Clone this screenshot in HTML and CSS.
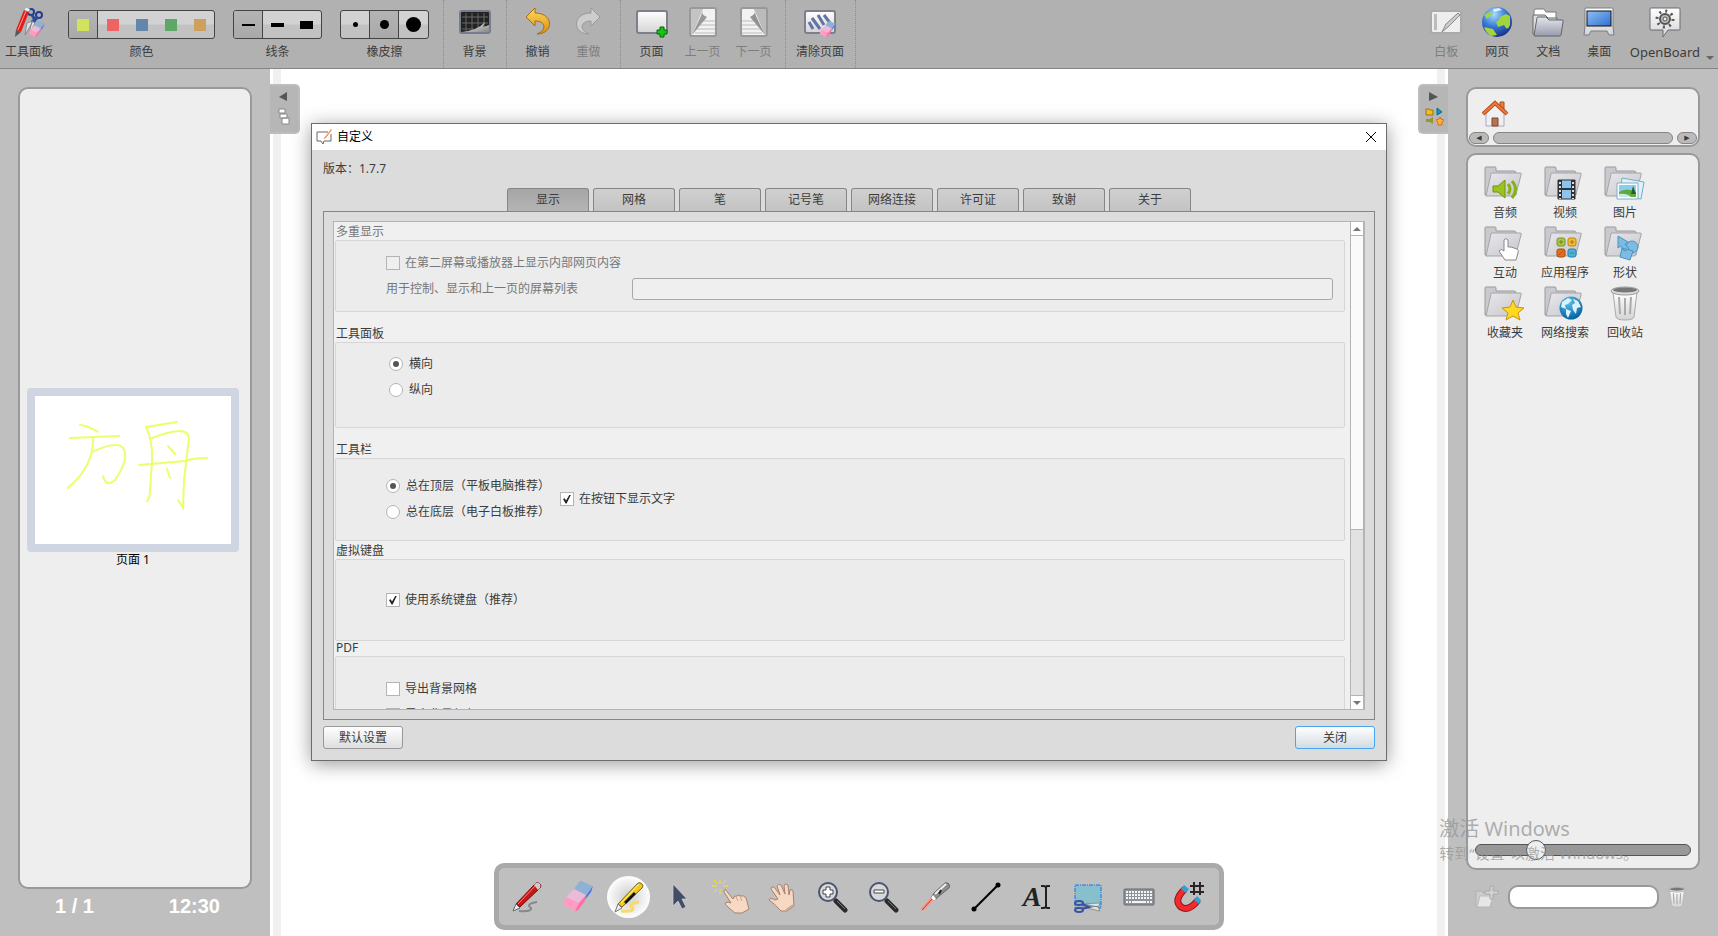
FILE: index.html
```
<!DOCTYPE html>
<html lang="zh-CN">
<head>
    <title>OpenBoard</title>
    <meta charset="UTF-8">
    <meta name="viewport" content="width=device-width, initial-scale=1.0">
    <link rel="stylesheet" href="styles.css">
</head>
<body>
    <!-- shared gradients and shapes -->
    <svg class="defs" aria-hidden="true">
        <defs>
            <linearGradient id="silver" x1="0" y1="0" x2="0" y2="1"><stop offset="0" stop-color="#fff"/><stop offset="1" stop-color="#d4d4d6"/></linearGradient>
            <linearGradient id="folderFill" x1="0" y1="0" x2="1" y2="1"><stop offset="0" stop-color="#e9e9ed"/><stop offset="1" stop-color="#c6c6ca"/></linearGradient>
            <linearGradient id="gold" x1="0" y1="0" x2="0" y2="1"><stop offset="0" stop-color="#ffdc5c"/><stop offset="1" stop-color="#d98b12"/></linearGradient>
            <linearGradient id="sky" x1="0" y1="0" x2="1" y2="1"><stop offset="0" stop-color="#8fc0f5"/><stop offset="1" stop-color="#2f6fd0"/></linearGradient>
            <linearGradient id="slate" x1="0" y1="0" x2="0" y2="1"><stop offset="0" stop-color="#e4e6ee"/><stop offset="1" stop-color="#989cab"/></linearGradient>
            <linearGradient id="fold" x1="0" y1="0" x2="1" y2="1"><stop offset="0" stop-color="#f2f2f2"/><stop offset="1" stop-color="#888"/></linearGradient>
            <radialGradient id="sea" cx="40%" cy="25%" r="80%"><stop offset="0" stop-color="#a8dcff"/><stop offset=".5" stop-color="#3a78d8"/><stop offset="1" stop-color="#142a80"/></radialGradient>
            <radialGradient id="webSea" cx="40%" cy="25%" r="80%"><stop offset="0" stop-color="#5cc0ee"/><stop offset="1" stop-color="#005c9c"/></radialGradient>
            <symbol id="folder" viewBox="0 0 42 36">
                <path d="M1 30V3q0-1 1-1h9q1 0 1 1v3h18q2 0 2 2v22z" fill="#c9c9ce" stroke="#9a9a9e"/>
                <path d="M2 31 7 9q0-1 1-1h28q2 0 1 2l-5 19q-1 2-2 2z" fill="url(#folderFill)" stroke="#a5a5a9"/>
            </symbol>
            <symbol id="eraser" viewBox="0 0 32 32">
                <path d="M12 8 17 1q1-1 2-1l12 5-6 11z" fill="#8fb1d3"/>
                <path d="m31 5-7 10-2 5 7-9z" fill="#4a70e0"/>
                <path d="m12 8 12 6-6 10L4 16z" fill="#eabbd8"/>
                <path d="M4 16 1 24l12 6 4-8z" fill="#ff9cc4"/>
                <path d="m24 14-7 8-4 8q2 0 3-1l7-9z" fill="#ff6fa8"/>
            </symbol>
            <symbol id="bin" viewBox="0 0 30 36">
                <path d="M3 7h24l-3 25q-1 3-9 3t-9-3z" fill="url(#silver)" stroke="#aaa"/>
                <path d="m9 12 1 17M15 13v17m6-18-1 17" stroke="#aaa" stroke-width="2" fill="none"/>
                <ellipse cx="15" cy="6" rx="14" ry="4" fill="#ddd" stroke="#999"/>
                <ellipse cx="15" cy="5" rx="12" ry="2.500" fill="#777"/>
            </symbol>
            <symbol id="lens" viewBox="0 0 32 32">
                <path d="m19 20 9 9" stroke="#2b2b2b" stroke-width="5" stroke-linecap="round"/>
                <path d="m20 20 8 8" stroke="#777" stroke-width="1"/>
                <circle cx="11" cy="11" r="9" fill="#d6d8dc" stroke="#4a5470" stroke-width="2"/>
            </symbol>
        </defs>
    </svg>

    <header class="toolbar">
        <div class="section section-pickers">
            <button class="tool">
                <svg width="32" height="32" viewBox="0 0 32 32">
                    <circle cx="18" cy="6" r="3" fill="none" stroke="#23408f" stroke-width="2"/><circle cx="26" cy="9" r="3" fill="none" stroke="#23408f" stroke-width="2"/>
                    <path d="m19 9 3 5-2 3M24 12l-5 4" stroke="#2b4b9c" stroke-width="3" fill="none"/><path d="m20 15-8 14 2-12zM19 15l-3 13 6-11z" fill="#dfe3ea" stroke="#777" stroke-width=".7"/>
                    <path d="m11 4 5 2-8 20-5-2z" fill="#e21c17"/><path d="M13 5 5 24" stroke="#fa9b92" stroke-width="1"/><path d="m11 4 2-3 4 2-1 3z" fill="#eee" stroke="#888" stroke-width=".5"/><path d="m3 24 5 2-6 5z" fill="#555"/>
                    <use href="#eraser" x="15" y="15" width="17" height="17"/>
                </svg>
                <span>工具面板</span>
            </button>
            <div class="picker">
                <div class="cells">
                    <button class="on" aria-label="黄色"><i class="swatch yellow"></i></button>
                    <button aria-label="红色"><i class="swatch red"></i></button>
                    <button aria-label="蓝色"><i class="swatch blue"></i></button>
                    <button aria-label="绿色"><i class="swatch green"></i></button>
                    <button aria-label="橙色"><i class="swatch orange"></i></button>
                </div>
                <span>颜色</span>
            </div>
            <div class="picker">
                <div class="cells">
                    <button class="on" aria-label="细线"><i class="line thin"></i></button>
                    <button aria-label="中线"><i class="line medium"></i></button>
                    <button aria-label="粗线"><i class="line thick"></i></button>
                </div>
                <span>线条</span>
            </div>
            <div class="picker">
                <div class="cells">
                    <button class="split" aria-label="小橡皮"><i class="dot small"></i></button>
                    <button class="on" aria-label="中橡皮"><i class="dot mid"></i></button>
                    <button aria-label="大橡皮"><i class="dot big"></i></button>
                </div>
                <span>橡皮擦</span>
            </div>
        </div>
        <div class="section">
            <button class="tool">
                <svg width="32" height="32" viewBox="0 0 32 32">
                    <rect x="1" y="5" width="30" height="22" rx="2" fill="#222" stroke="#777d8d" stroke-width="2"/>
                    <path d="M7 7v18M13 7v18M19 7v18M25 7v14M3 11h26M3 17h26M3 23h12" stroke="#666" stroke-width="1"/>
                    <path d="M3 26q16-2 23-10l-2 5 6-2v7z" fill="url(#fold)"/>
                </svg>
                <span>背景</span>
            </button>
        </div>
        <div class="section">
            <button class="tool">
                <svg width="32" height="32" viewBox="0 0 32 32">
                    <path d="M4 11 13 2v5c19 0 19 21 2 21 10-4 9-13-2-13v5z" fill="url(#gold)" stroke="#a86d12"/>
                </svg>
                <span>撤销</span>
            </button>
            <button class="tool" disabled>
                <svg width="32" height="32" viewBox="0 0 32 32">
                    <path d="M27 11 18 2v5C-1 7-1 28 16 28 6 24 7 15 18 15v5z" fill="#cdcdcd" stroke="#999"/>
                </svg>
                <span>重做</span>
            </button>
        </div>
        <div class="section">
            <button class="tool">
                <svg width="32" height="32" viewBox="0 0 32 32">
                    <rect x="1" y="5" width="30" height="22" rx="2" fill="url(#silver)" stroke="#7d7f8c" stroke-width="2"/>
                    <path d="M24 21h4v3h3v4h-3v3h-4v-3h-3v-4h3z" fill="#12c812" stroke="#086008"/>
                </svg>
                <span>页面</span>
            </button>
            <button class="tool" disabled>
                <svg width="32" height="32" viewBox="0 0 32 32">
                    <rect x="3" y="2" width="26" height="28" rx="2" fill="#f2f2f2" stroke="#999" stroke-width="2"/>
                    <path d="M12 15h16M11 19h17M9 23h19M8 27h20" stroke="#bbb"/>
                    <path d="M4 3h12L5 29H4z" fill="#c4c4c4"/><path d="M16 3q-3 5 4 8L5 29l9-19z" fill="#999"/>
                </svg>
                <span>上一页</span>
            </button>
            <button class="tool" disabled>
                <svg width="32" height="32" viewBox="0 0 32 32">
                    <rect x="3" y="2" width="26" height="28" rx="2" fill="#f2f2f2" stroke="#999" stroke-width="2"/>
                    <path d="M4 15h16M4 19h17M4 23h19M4 27h20" stroke="#bbb"/>
                    <path d="M28 3H16l11 26h1z" fill="#bbb"/><path d="M16 3q3 5-4 8l15 18-9-19z" fill="#929292"/>
                </svg>
                <span>下一页</span>
            </button>
        </div>
        <div class="section">
            <button class="tool">
                <svg width="32" height="32" viewBox="0 0 32 32">
                    <rect x="1" y="5" width="30" height="22" rx="2" fill="url(#silver)" stroke="#7d7f8c" stroke-width="2"/>
                    <path d="m5 16 4 7M8 12l8 11M14 9l6 10M20 9l6 8" stroke="#6273a4" stroke-width="3"/>
                    <use href="#eraser" x="15" y="15" width="17" height="17"/>
                </svg>
                <span>清除页面</span>
            </button>
        </div>
        <div class="section section-right">
            <button class="tool" disabled>
                <svg width="32" height="32" viewBox="0 0 32 32">
                    <rect x="1" y="5" width="30" height="22" rx="2" fill="#eee" stroke="#aaa" stroke-width="2"/>
                    <rect x="4" y="8" width="3" height="16" fill="#bbb"/>
                    <path d="m12 26 4-8L28 7l2 2-12 12z" fill="#ccc" stroke="#888"/>
                </svg>
                <span>白板</span>
            </button>
            <button class="tool">
                <svg width="32" height="32" viewBox="0 0 32 32">
                    <circle cx="16" cy="16" r="15" fill="url(#sea)"/>
                    <path d="M15 16q4-2 4-5l6-3 4 2v9q-2 5-4 3l-2-3-6 2zM3 9l5-3 4 2-6 5zM3 21l9 2 4 6-6 1q-5-3-7-9z" fill="#a4d43c"/>
                    <path d="m12 3 6-1 3 2-4 1-4 1z" fill="#fff" opacity=".8"/>
                </svg>
                <span>网页</span>
            </button>
            <button class="tool">
                <svg width="32" height="32" viewBox="0 0 32 32">
                    <path d="M2 26V5q0-2 2-2h8l2 3h10v20z" fill="#fff" stroke="#777b87"/>
                    <path d="M1 28V10q0-1 1-1h11l3 3h9v16z" fill="#ddd" stroke="#666"/>
                    <path d="m2 29 3-17q0-1 1-1h8l3 3h13q2 0 1 2l-2 13q0 1-2 1H3q-1 0-1-1z" fill="url(#slate)" stroke="#60636d"/>
                </svg>
                <span>文档</span>
            </button>
            <button class="tool">
                <svg width="32" height="32" viewBox="0 0 32 32">
                    <path d="M2 3q0-1 1-1h26q1 0 1 1v18l1 8h-5l-2-4H8l-2 4H1l1-8z" fill="url(#silver)" stroke="#777c86"/>
                    <rect x="4" y="5" width="24" height="15" fill="url(#sky)" stroke="#111"/>
                </svg>
                <span>桌面</span>
            </button>
            <button class="tool">
                <svg width="32" height="32" viewBox="0 0 32 32">
                    <path d="M2 2h28q1 0 1 1v20q0 1-1 1H19l-5 7v-7H2q-1 0-1-1V3q0-1 1-1z" fill="url(#silver)" stroke="#666b76"/>
                    <circle cx="16" cy="13" r="8" fill="none" stroke="#555" stroke-width="3" stroke-dasharray="2 4.280"/>
                    <circle cx="16" cy="13" r="5" fill="#bbb" stroke="#555" stroke-width="2"/><circle cx="16" cy="13" r="2" fill="#eee" stroke="#555"/>
                </svg>
                <span class="latin">OpenBoard</span>
            </button>
            <button class="more" aria-label="更多"></button>
        </div>
    </header>

    <div class="workspace">
        <aside class="side">
            <div class="panel pages">
                <figure>
                    <svg class="thumb" viewBox="0 0 196 148">
                        <path d="M45 29q9 1 18 7M35 42l49-2M58 42q1 28-25 50M57 56q24-11 30-5 9 10-7 33-9 8-12-4M142 26l-31 5q7 14 6 36l-2 27q0 8-3 11M117 42q36-14 37 0l-5 42-1 28-5-8M133 50l7 8M104 69l46-4q8-3 22-3M132 73l3 9"/>
                    </svg>
                    <figcaption>页面 1</figcaption>
                </figure>
            </div>
            <div class="status"><span>1 / 1</span><span>12:30</span></div>
        </aside>

        <main class="board">
            <button class="flap flap-left" aria-label="收起页面栏">
                <svg width="14" height="36" viewBox="0 0 14 36">
                    <path d="M10 1v9L2 6z" fill="#555"/>
                    <path d="M2 18h6v4H2zM3 23h7v4H3zM5 27h7v6H5z" fill="#fff" stroke="#888"/>
                </svg>
            </button>
            <button class="flap flap-right" aria-label="收起资源栏">
                <svg width="20" height="36" viewBox="0 0 20 36">
                    <path d="M5 1v9l9-4z" fill="#555"/>
                    <path d="M2 18h3l1 1h3v5H2z" fill="#f1bc22" stroke="#9b7410"/><path d="M13 17v7l5-3z" fill="#129ab8" stroke="#0b6a80"/>
                    <path d="M9 26v7l-3-2H2v-3h4z" fill="#98942a"/><path d="m16 26 1 2 3 1-2 2v3h-4v-3l-2-2 3-1z" fill="#ffb03c" stroke="#e06a10"/>
                </svg>
            </button>

            <div class="dialog" role="dialog" aria-labelledby="dialog-title">
                <div class="titlebar">
                    <svg width="17" height="17" viewBox="0 0 17 17" fill="none">
                        <path d="M12 3H1v9h4l2 3 1-3h7V5" stroke="#666"/><path d="m8 9 7-9 1 1-6 8-2 1z" fill="#f49a5c"/>
                    </svg>
                    <h2 id="dialog-title">自定义</h2>
                    <button class="close" aria-label="关闭窗口">
                        <svg width="12" height="12" viewBox="0 0 12 12"><path d="m1 1 10 10M11 1 1 11" stroke="#000"/></svg>
                    </button>
                </div>
                <div class="content">
                    <p class="version">版本：1.7.7</p>
                    <div class="tabs" role="tablist">
                        <button role="tab" aria-selected="true">显示</button>
                        <button role="tab">网格</button>
                        <button role="tab">笔</button>
                        <button role="tab">记号笔</button>
                        <button role="tab">网络连接</button>
                        <button role="tab">许可证</button>
                        <button role="tab">致谢</button>
                        <button role="tab">关于</button>
                    </div>
                    <div class="pane">
                        <div class="scroll">
                            <div class="groups">
                                <section class="group first disabled">
                                    <h3>多重显示</h3>
                                    <div class="box box-screens">
                                        <label><input type="checkbox" disabled>在第二屏幕或播放器上显示内部网页内容</label>
                                        <div class="field">
                                            <label for="screens">用于控制、显示和上一页的屏幕列表</label>
                                            <input type="text" id="screens" disabled>
                                        </div>
                                    </div>
                                </section>
                                <section class="group">
                                    <h3>工具面板</h3>
                                    <div class="box box-palette">
                                        <label><input type="radio" name="palette" checked>横向</label>
                                        <label><input type="radio" name="palette">纵向</label>
                                    </div>
                                </section>
                                <section class="group">
                                    <h3>工具栏</h3>
                                    <div class="box box-toolbar">
                                        <div class="stack">
                                            <label><input type="radio" name="toolbar" checked>总在顶层（平板电脑推荐）</label>
                                            <label><input type="radio" name="toolbar">总在底层（电子白板推荐）</label>
                                        </div>
                                        <label><input type="checkbox" checked>在按钮下显示文字</label>
                                    </div>
                                </section>
                                <section class="group near">
                                    <h3>虚拟键盘</h3>
                                    <div class="box box-keyboard">
                                        <label><input type="checkbox" checked>使用系统键盘（推荐）</label>
                                    </div>
                                </section>
                                <section class="group joined">
                                    <h3>PDF</h3>
                                    <div class="box box-pdf">
                                        <label><input type="checkbox">导出背景网格</label>
                                        <label><input type="checkbox">导出背景颜色</label>
                                    </div>
                                </section>
                            </div>
                            <div class="scrollbar">
                                <button class="up" aria-label="向上滚动"></button>
                                <div class="thumb-bar"></div>
                                <div class="track"></div>
                                <button class="down" aria-label="向下滚动"></button>
                            </div>
                        </div>
                    </div>
                    <div class="actions">
                        <button>默认设置</button>
                        <button class="primary">关闭</button>
                    </div>
                </div>
            </div>

            <nav class="palette">
                <button aria-label="笔">
                    <svg width="32" height="32" viewBox="0 0 32 32">
                        <path d="M8 30q13 1 12-3-6-4 6-6" fill="none" stroke="#888" stroke-width="2"/>
                        <path d="m5 23 20-21q2-1 4 1 2 2 0 4L9 26z" fill="#c91515" stroke="#731010"/><path d="m7 23 19-20" stroke="#ff8478"/><path d="m23 4 2-2q2-1 4 1 1 2 0 4l-2 2z" fill="#ccc"/><path d="m5 23 4 4-7 3z" fill="#eee" stroke="#666"/>
                    </svg>
                </button>
                <button aria-label="橡皮擦"><svg width="32" height="32"><use href="#eraser"/></svg></button>
                <button class="active" aria-label="荧光笔">
                    <svg width="32" height="32" viewBox="0 0 32 32">
                        <path d="M8 30q13 1 12-3-6-4 6-6" fill="none" stroke="#f8da68" stroke-width="3"/>
                        <path d="m5 23 20-21q2-1 4 1 2 2 0 4L9 26z" fill="#f2c91d" stroke="#7b6510"/><path d="m21 11 2 2L13 23l-2-2z" fill="#111"/><path d="M8 22 26 3" stroke="#fff79a"/><path d="m5 23 4 4-7 4z" fill="#eee" stroke="#777"/>
                    </svg>
                </button>
                <button aria-label="选择">
                    <svg width="32" height="32" viewBox="0 0 32 32"><path d="M9 3v22l5-5 4 8 4-2-4-8h5z" fill="#444d66" stroke="#d5d5dc" stroke-width=".7"/></svg>
                </button>
                <button aria-label="互动">
                    <svg width="40" height="38" viewBox="0 0 40 38">
                        <path d="M9 1v5M9 11v5M1 8h5M12 8h5M3 2l3 3M15 2l-3 3M3 14l3-3M12 11l3 3" stroke="#ffdf22"/>
                        <path d="m14 11 8 10q1-4 4-3 2-2 4 0 3-1 5 2l3 11-7 4h-7l-6-5-4-4q1-3 6-1l-7-11q0-3 1-3z" fill="#f7d8c2" stroke="#a58270"/><path d="m25 19 2 4M29 18l2 5" stroke="#c9a28b"/>
                    </svg>
                </button>
                <button aria-label="滚动页面">
                    <svg width="32" height="32" viewBox="0 0 32 32"><path d="m12 18-7-10q0-3 3-2l6 8-3-9q1-3 4-1l4 9-1-9q2-2 4 0l1 10 1-5q3-1 3 1l1 15-7 5h-6q-7-8-12-11 1-3 6 0z" fill="#f7d8c2" stroke="#a58270"/><path d="m20 29 7-5" stroke="#d0ac96" stroke-width="2"/></svg>
                </button>
                <button aria-label="放大"><svg width="32" height="32" viewBox="0 0 32 32"><use href="#lens"/><path d="M9 6h4v3h3v4h-3v3H9v-3H6V9h3z" fill="#fff" stroke="#444"/></svg></button>
                <button aria-label="缩小"><svg width="32" height="32" viewBox="0 0 32 32"><use href="#lens"/><path d="M6 9h10v3H6z" fill="#fff" stroke="#444"/></svg></button>
                <button aria-label="激光笔">
                    <svg width="32" height="32" viewBox="0 0 32 32">
                        <path d="m3 29 10-11" stroke="#f29a92" stroke-width="4"/><path d="m3 29 10-11" stroke="#e22a22"/>
                        <path d="m12 17 3-5L26 2q2-1 4 1 1 2 0 4L19 16l-4 4z" fill="#8d8d8d" stroke="#666"/><path d="m16 13 11-10" stroke="#eee" stroke-width="2"/><path d="m12 17 3 3 2-2-3-4z" fill="#fff"/><path d="m20 13 2-4" stroke="#222" stroke-width="2"/>
                    </svg>
                </button>
                <button aria-label="画线">
                    <svg width="32" height="32" viewBox="0 0 32 32"><path d="M4 28 28 4" stroke="#000" stroke-width="2"/><circle cx="4" cy="28" r="2.500"/><circle cx="28" cy="4" r="2.500"/></svg>
                </button>
                <button class="text-tool" aria-label="文字">
                    <span>A</span>
                    <svg width="9" height="24" viewBox="0 0 9 24" fill="none"><path d="M0 1h3l2 1 1-1h3M5 2v20M0 23h3l2-1 1 1h3" stroke="#222" stroke-width="2"/></svg>
                </button>
                <button aria-label="截图">
                    <svg width="32" height="32" viewBox="0 0 32 32">
                        <rect x="3" y="4" width="26" height="23" fill="#87bfcd" stroke="#1f6fe8" stroke-dasharray="4 1 1 1"/>
                        <path d="m10 23 18-1-1 3-14 2zM10 26l18 4-2-4-14-3z" fill="#e4e4e4" stroke="#777" stroke-width=".7"/>
                        <ellipse cx="7" cy="22" rx="4" ry="2" fill="none" stroke="#3f4fa0" stroke-width="2"/><ellipse cx="7" cy="29" rx="4" ry="2" fill="none" stroke="#3f4fa0" stroke-width="2"/><path d="m10 23 7 3-7 2" stroke="#3f4fa0" stroke-width="2" fill="none"/>
                    </svg>
                </button>
                <button aria-label="键盘">
                    <svg width="32" height="32" viewBox="0 0 32 32">
                        <rect x="1" y="8" width="30" height="16" rx="1" fill="#8e9299" stroke="#666a72"/>
                        <path d="M3 11h26M3 14h26M3 17h26M3 21h26" stroke="#f4f4f4" stroke-width="2" stroke-dasharray="2 1"/><path d="M10 21h12" stroke="#f4f4f4" stroke-width="2"/>
                    </svg>
                </button>
                <button aria-label="吸附">
                    <svg width="32" height="32" viewBox="0 0 32 32">
                        <path d="M11 8Q-1 19 7 26q8 5 17-7" fill="none" stroke="#8c1414" stroke-width="7"/><path d="M11 8Q-1 19 7 26q8 5 17-7" fill="none" stroke="#f02a2e" stroke-width="5"/>
                        <path d="m10 4 5 4-3 4-5-4zM23 15l4 4-2 4-5-4z" fill="#2aa2dc"/><path d="M20 1v13M26 1v13M16 5h14M16 11h14" stroke="#2b2427" stroke-width="2"/>
                    </svg>
                </button>
            </nav>
        </main>

        <aside class="side side-right">
            <div class="panel path">
                <button class="home" aria-label="主页">
                    <svg width="26" height="28" viewBox="0 0 26 28">
                        <path d="M18 2h4v10h-4z" fill="#e98045" stroke="#a94f20"/><path d="M4 13 13 5l9 8v13H4z" fill="#eef0f3" stroke="#aab"/>
                        <path d="M1 14 13 3l12 11" fill="none" stroke="#b64c18" stroke-width="4"/><path d="M1 14 13 3l12 11" fill="none" stroke="#f07c3c" stroke-width="2"/><path d="M10 18h6v8h-6z" fill="#b9744f" stroke="#80462c"/>
                    </svg>
                </button>
                <div class="hscroll">
                    <button aria-label="向左">◀</button>
                    <div class="bar"></div>
                    <button aria-label="向右">▶</button>
                </div>
            </div>
            <div class="panel library">
                <div class="items">
                    <button><svg width="42" height="36" viewBox="0 0 42 36"><use href="#folder"/><path d="M9 21h5l7-6v18l-7-6H9z" fill="#9bc31c" stroke="#6f9410"/><path d="M24 19q4 5 0 10M28 16q7 8 0 17" fill="none" stroke="#88b018" stroke-width="3"/></svg><span>音频</span></button>
                    <button><svg width="42" height="36" viewBox="0 0 42 36"><use href="#folder"/><path d="M14 15h17v19H14z" fill="#8dc4ee" stroke="#333"/><path d="M16 15v19M29 15v19" stroke="#333" stroke-width="4"/><path d="M16 17v17M29 17v17" stroke="#ddd" stroke-width="2" stroke-dasharray="2 2"/><path d="M17 24h11" stroke="#333" stroke-width="2"/></svg><span>视频</span></button>
                    <button><svg width="42" height="36" viewBox="0 0 42 36"><use href="#folder"/><path d="m18 13 22 4-3 17-21-3z" fill="#dff2fa" stroke="#71aec8"/><path d="M13 18h21v16H13z" fill="#fff" stroke="#7ab0bf"/><path d="M15 20h17v12H15z" fill="#86d0ee"/><path d="M15 27q8-5 17 0v5H15z" fill="#62a93b"/><path d="M15 29q8-1 12 3H15z" fill="#c9e6ee"/><path d="m29 21 3 8h-5z" fill="#285e2c"/></svg><span>图片</span></button>
                    <button><svg width="42" height="36" viewBox="0 0 42 36"><use href="#folder"/><path d="M20 26V15q2-3 4 0v7h3l3 1 3 1q2 1 1 4l-2 7H21l-6-9q2-3 5 0z" fill="#fff" stroke="#888"/></svg><span>互动</span></button>
                    <button><svg width="42" height="36" viewBox="0 0 42 36"><use href="#folder"/><g stroke-width="1"><rect x="13" y="13" width="8" height="8" rx="2" fill="#a6c83c" stroke="#78942a"/><rect x="24" y="13" width="8" height="8" rx="2" fill="#f4bb26" stroke="#b98815"/><rect x="13" y="24" width="8" height="8" rx="2" fill="#e46c1c" stroke="#a64b10"/><rect x="24" y="24" width="8" height="8" rx="2" fill="#48b2dc" stroke="#2680a6"/></g><path d="M16 16h2v2h-2zM27 16h2v2h-2zM15 30l4-4M26 28h4" stroke="#665533" stroke-opacity=".6" fill="none"/></svg><span>应用程序</span></button>
                    <button><svg width="42" height="36" viewBox="0 0 42 36"><use href="#folder"/><circle cx="28" cy="22" r="6" fill="#7cbbe2" stroke="#4b93c0"/><path d="m14 11 10 6-3 2 4 5-5 2-3-5-3 2zM18 23l11 3-3 9-10-3z" fill="#7cbbe2" stroke="#4b93c0"/></svg><span>形状</span></button>
                    <button><svg width="42" height="36" viewBox="0 0 42 36"><use href="#folder"/><path d="m29 15 3 7 8 1-6 5 2 7-7-4-7 4 2-7-6-5 8-1z" fill="#ffd820" stroke="#c79212"/></svg><span>收藏夹</span></button>
                    <button><svg width="42" height="36" viewBox="0 0 42 36"><use href="#folder"/><circle cx="27" cy="23" r="11.500" fill="url(#webSea)"/><path d="m18 17 6-4 4 2-4 4-3 1 1 4-5-2zM22 24l5 2-3 7-2-4zM29 14l5 2 3 6-4 1-1 6-3-4-1-5 3-2z" fill="#dcf1fb"/></svg><span>网络搜索</span></button>
                    <button><svg width="42" height="36"><use href="#bin"/></svg><span>回收站</span></button>
                </div>
                <input type="range" min="0" max="100" value="26" aria-label="缩略图大小">
            </div>
            <div class="finder">
                <button disabled aria-label="新建文件夹">
                    <svg width="24" height="24" viewBox="0 0 24 24"><path d="M1 22V6h6l1 2h8v14z" fill="#ccc" stroke="#b2b2b2"/><path d="m2 22 3-11h13l-3 11z" fill="#e6e6e6" stroke="#bbb"/><path d="M15 1h3v5h5v3h-5v5h-3V9h-5V6h5z" fill="#d3d3d3" stroke="#aaa"/></svg>
                </button>
                <input type="search" aria-label="搜索">
                <button disabled aria-label="删除"><svg width="18" height="22"><use href="#bin"/></svg></button>
            </div>
        </aside>
    </div>

    <div class="watermark">
        <p class="big-line">激活 Windows</p>
        <p>转到“设置”以激活 Windows。</p>
    </div>
</body>
</html>
```
FILE: styles.css
```
* {
    box-sizing: border-box;
}
body {
    margin: 0;
    height: 100vh;
    display: flex;
    flex-direction: column;
    overflow: hidden;
    background: #fff;
    color: #3c3c3c;
    font: 12px/16px "Noto Sans", "Noto Sans CJK SC", sans-serif;
}
button {
    margin: 0;
    padding: 0;
    border: 0;
    background: none;
    color: inherit;
    font: inherit;
}
input {
    margin: 0;
    font: inherit;
}
h2, h3, p, figure {
    margin: 0;
    font-size: 12px;
    font-weight: normal;
}
svg {
    display: block;
    flex: none;
}
.defs {
    position: absolute;
    width: 0;
    height: 0;
}

/* top toolbar */
.toolbar {
    display: flex;
    flex: none;
    height: 69px;
    background: #b1b1b1;
    border-bottom: 1px solid #858585;
}
.section {
    display: flex;
    padding: 0 6px 0 5px;
    border-right: 1px dotted #8c8c8c;
}
.section-pickers {
    padding: 0 6px 0 0;
}
.section-right {
    margin-left: auto;
    padding: 0;
    border: 0;
}
.tool {
    display: flex;
    flex-direction: column;
    align-items: center;
    gap: 6px;
    min-width: 51px;
    padding: 6px 5px 0;
}
.tool span, .picker > span {
    white-space: nowrap;
}
.tool:disabled {
    color: #7d7d7d;
}
.latin {
    font-size: 13px;
}
.more {
    align-self: flex-end;
    margin: 0 4px 8px 1px;
    border: 4px solid transparent;
    border-top-color: #666;
    border-bottom: 0;
}
.picker {
    display: flex;
    flex-direction: column;
    align-items: center;
    gap: 5px;
    margin: 0 8px 0 10px;
    padding-top: 10px;
}
.cells {
    display: flex;
    height: 29px;
    border: 1px solid #444;
    border-radius: 3px;
    overflow: hidden;
    background: linear-gradient(#d2d2d2 48%, #c2c2c2 52%);
}
.cells button {
    display: flex;
    align-items: center;
    justify-content: center;
    width: 29px;
}
.cells .on {
    background: linear-gradient(#b4b4b4, #a9a9a9);
    border-right: 1px solid #444;
}
.cells .split {
    border-right: 1px solid #444;
}
.swatch {
    width: 12px;
    height: 12px;
}
.yellow { background: #d2e25b; }
.red { background: #ec6464; }
.blue { background: #6387ab; }
.green { background: #5fa766; }
.orange { background: #cf9f60; }
.line {
    width: 13px;
    background: #000;
}
.thin { height: 2px; }
.medium { height: 4px; }
.thick { height: 8px; }
.dot {
    border-radius: 50%;
    background: #000;
}
.small { width: 5px; height: 5px; }
.mid { width: 9px; height: 9px; }
.big { width: 15px; height: 15px; }

/* main columns */
.workspace {
    display: flex;
    flex: 1;
    min-height: 0;
}
.side {
    display: flex;
    flex-direction: column;
    flex: none;
    width: 270px;
    padding: 18px 18px 0;
    background: #bfbfbf;
}
.panel {
    border: 2px solid #999;
    border-radius: 10px;
    background: #eee;
}
.pages {
    display: flex;
    flex: 1;
    flex-direction: column;
    justify-content: center;
    padding: 0 11px 21px 7px;
}
.thumb {
    width: 100%;
    border: 8px solid #cfd6e2;
    border-radius: 4px;
    background: #fff;
}
.thumb path {
    fill: none;
    stroke: #ecff6b;
    stroke-width: 2;
    stroke-linecap: round;
}
figcaption {
    color: #000;
    text-align: center;
}
.status {
    display: flex;
    justify-content: space-between;
    height: 47px;
    padding: 5px 32px 0 37px;
    color: #fff;
    font: bold 20px/24px "Liberation Sans", Arial, sans-serif;
}
.board {
    position: relative;
    flex: 1;
    min-width: 0;
    background: linear-gradient(90deg, #fff 3px, #f0f0f0 3px, #f0f0f0 11px, #fff 11px, #fff calc(100% - 11px), #f0f0f0 calc(100% - 11px), #f0f0f0 calc(100% - 3px), #fff calc(100% - 3px));
}
.flap {
    position: absolute;
    top: 15px;
    display: flex;
    align-items: center;
    justify-content: center;
    width: 30px;
    height: 50px;
    background: #b6b6b6;
    border: 2px solid #bdbdbd;
}
.flap-left {
    left: 0;
    border-left: 0;
    border-radius: 0 5px 5px 0;
}
.flap-right {
    right: 0;
    border-right: 0;
    border-radius: 5px 0 0 5px;
}

/* settings dialog */
.dialog {
    position: absolute;
    top: 54px;
    right: 61px;
    bottom: 175px;
    left: 41px;
    display: flex;
    flex-direction: column;
    border: 1px solid #6c6c6c;
    background: #dcdcdc;
    box-shadow: 0 3px 18px rgba(0, 0, 0, 0.4);
}
.titlebar {
    display: flex;
    align-items: center;
    gap: 4px;
    height: 26px;
    padding: 0 8px 0 4px;
    background: #fff;
    color: #000;
}
.close {
    margin-left: auto;
    padding: 1px;
}
.content {
    display: flex;
    flex-direction: column;
    flex: 1;
    min-height: 0;
    padding: 11px;
}
.tabs {
    display: flex;
    justify-content: center;
    gap: 4px;
    margin-top: 11px;
}
.tabs button {
    width: 82px;
    height: 23px;
    border: 1px solid #868686;
    border-bottom: 0;
    border-radius: 3px 3px 0 0;
    background: linear-gradient(#d0d0d0, #c3c3c3);
}
.tabs [aria-selected="true"] {
    background: linear-gradient(#a6a6a6, #b4b4b4);
}
.pane {
    display: flex;
    flex: 1;
    min-height: 0;
    padding: 9px;
    border: 1px solid #868686;
}
.scroll {
    display: flex;
    flex: 1;
    border: 1px solid #b4b4b4;
    background: #f0f0f0;
}
.groups {
    flex: 1;
    padding: 0 5px 0 1px;
    overflow: hidden;
}
.group {
    padding-top: 15px;
}
.first { padding-top: 3px; }
.near { padding-top: 3px; }
.joined { padding-top: 0; }
.disabled {
    color: #777;
}
.group h3 {
    padding: 0 1px 2px;
    line-height: 13px;
}
.box {
    border: 1px solid #d6d6d6;
    border-radius: 2px;
    background: #ececec;
}
.box-screens { padding: 9px 11px 9px 50px; }
.box-palette { padding: 8px 11px 24px 53px; }
.box-toolbar {
    display: flex;
    align-items: center;
    gap: 10px;
    padding: 14px 11px 15px 50px;
}
.box-keyboard { padding: 27px 11px 27px 50px; }
.box-pdf { padding: 19px 11px 19px 50px; }
.box label {
    display: flex;
    align-items: center;
    gap: 5px;
    height: 26px;
}
.field {
    display: grid;
    grid-template-columns: 246px 1fr;
    align-items: center;
}
.field input {
    height: 22px;
    border: 1px solid #a8a8a8;
    border-radius: 3px;
    background: #efefef;
}
.box input[type="checkbox"], .box input[type="radio"] {
    appearance: none;
    display: grid;
    place-items: center;
    width: 14px;
    height: 14px;
    border: 1px solid #b4b4b4;
    background: #fff;
}
.box input[type="radio"] {
    margin-right: 1px;
    border-radius: 50%;
}
.box input[type="checkbox"]:disabled {
    background: #efefef;
}
.box input[type="radio"]:checked::before {
    content: "";
    width: 6px;
    height: 6px;
    border-radius: 50%;
    background: #555;
}
.box input[type="checkbox"]:checked::before {
    content: "";
    width: 8px;
    height: 9px;
    background: #222;
    clip-path: polygon(0 50%, 20% 42%, 38% 66%, 82% 0, 100% 0, 45% 100%, 32% 100%);
}
.scrollbar {
    display: flex;
    flex-direction: column;
    width: 14px;
    border: 1px solid #b4b4b4;
    border-width: 0 1px;
    background: #e2e2e2;
}
.scrollbar button {
    display: grid;
    place-items: center;
    height: 14px;
    background: #fff;
}
.scrollbar button::before {
    content: "";
    border: 4px solid transparent;
}
.scrollbar .up {
    border-bottom: 1px solid #b4b4b4;
}
.scrollbar .down {
    border-top: 1px solid #b4b4b4;
}
.scrollbar .up::before {
    border-top: 0;
    border-bottom-color: #777;
}
.scrollbar .down::before {
    border-bottom: 0;
    border-top-color: #777;
}
.thumb-bar {
    flex: 64;
    background: #fafafa;
    border-bottom: 1px solid #b4b4b4;
}
.track {
    flex: 36;
}
.actions {
    display: flex;
    justify-content: space-between;
    margin-top: 6px;
}
.actions button {
    width: 80px;
    height: 23px;
    border: 1px solid #999;
    border-radius: 3px;
    background: linear-gradient(#fff, #dedede);
}
.actions .primary {
    border-color: #46a6f5;
    background: linear-gradient(#fff, #d3dbe0);
}

/* floating drawing tools */
.palette {
    position: absolute;
    bottom: 6px;
    left: 50%;
    display: flex;
    align-items: center;
    height: 67px;
    padding: 0 4px 0 2px;
    border: 5px solid #a9a9a9;
    border-radius: 10px;
    background: #bfbfbf;
    transform: translateX(-50%);
}
.palette button {
    display: flex;
    align-items: center;
    justify-content: center;
    width: 51px;
    height: 42px;
}
.palette .active {
    width: 43px;
    margin: 0 4px;
    border-radius: 50%;
    background: radial-gradient(#ccc, #fff 72%);
}
.palette .text-tool span {
    color: #222;
    font: italic bold 28px/32px "Liberation Serif", serif;
}

/* right library */
.path {
    height: 60px;
    flex: none;
    margin-bottom: 6px;
    padding: 11px 1px 0;
}
.home {
    display: block;
    margin-left: 13px;
}
.hscroll {
    display: flex;
    justify-content: space-between;
    gap: 4px;
    margin-top: 4px;
}
.hscroll button, .bar {
    height: 12px;
    border: 1px solid #858585;
    border-radius: 6px;
    background: #bbb;
}
.hscroll button {
    width: 20px;
    font: 7px/10px "DejaVu Sans", sans-serif;
}
.bar {
    flex: 1;
}
.library {
    display: flex;
    flex: 1;
    flex-direction: column;
    justify-content: space-between;
    margin-bottom: 14px;
    padding: 10px 7px 8px;
}
.items {
    display: grid;
    grid-template-columns: repeat(3, 60px);
}
.items button {
    display: flex;
    flex-direction: column;
    align-items: center;
    gap: 4px;
    height: 60px;
}
input[type="range"] {
    appearance: none;
    width: 100%;
    height: 20px;
    background: none;
}
input[type="range"]::-webkit-slider-runnable-track {
    height: 12px;
    border: 1px solid #555;
    border-radius: 6px;
    background: #999;
}
input[type="range"]::-webkit-slider-thumb {
    appearance: none;
    width: 20px;
    height: 20px;
    margin-top: -5px;
    border: 1px solid #555;
    border-radius: 50%;
    background: #eee;
}
.finder {
    display: flex;
    align-items: center;
    gap: 9px;
    height: 26px;
    margin: 0 14px 26px 9px;
}
.finder input {
    appearance: none;
    flex: 1;
    min-width: 0;
    height: 24px;
    border: 2px solid #999;
    border-radius: 10px;
    background: #fff;
}

/* system notice in the corner */
.watermark {
    position: absolute;
    right: 80px;
    bottom: 73px;
    color: rgba(150, 150, 150, 0.75);
    pointer-events: none;
}
.watermark p {
    font-size: 15px;
    line-height: 20px;
}
.watermark .big-line {
    font-size: 20px;
    line-height: 28px;
}
```
